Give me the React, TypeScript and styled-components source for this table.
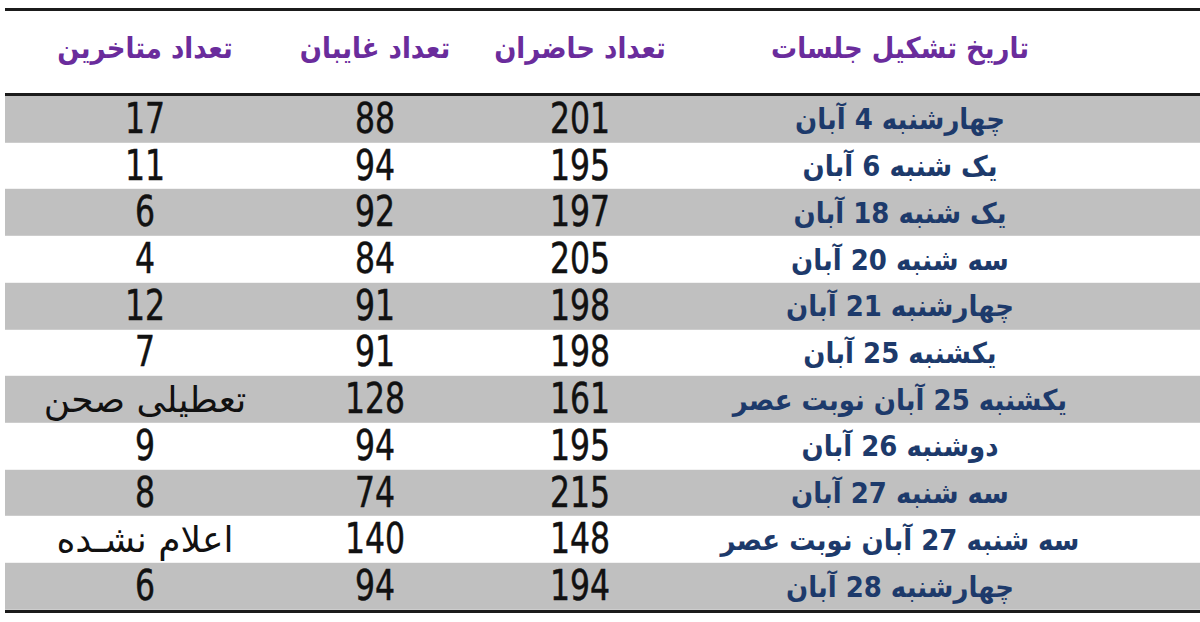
import React from "react";
import styled, { createGlobalStyle } from "styled-components";

const GlobalStyle = createGlobalStyle`
  html, body { margin: 0; padding: 0; background: #ffffff; }
  body { font-family: "DejaVu Sans", sans-serif; }
`;

const Table = styled.div`
  direction: rtl;
  margin-left: 5px;
  padding-top: 8px;
  width: 1195px;
`;

const Rule = styled.div`
  height: 3px;
  background: #1b1b1b;
`;

const Grid = styled.div`
  display: grid;
  grid-template-columns: 410px 230px 180px 280px;
  padding-inline-start: 95px;
  align-items: center;
`;

const HeaderRow = styled(Grid)`
  height: 82px;
  box-sizing: border-box;
  padding-bottom: 8px;
  background: #ffffff;
`;

const BodyRow = styled(Grid)<{ $shaded: boolean }>`
  height: 46.73px;
  background: ${(p) => (p.$shaded ? "#c0c0c0" : "#ffffff")};
  box-shadow: inset 0 -1px 0 ${(p) => (p.$shaded ? "#cdcdcd" : "#f2f2f2")};
`;

const HeadCell = styled.div`
  text-align: center;
  white-space: nowrap;
`;

const HeadText = styled.span`
  display: inline-block;
  font-family: "DejaVu Sans", sans-serif;
  font-weight: bold;
  font-size: 26px;
  color: #6a2c9c;
  transform: scaleY(1.12);
`;

const DateCell = styled.div`
  text-align: center;
  white-space: nowrap;
`;

const DateText = styled.span`
  display: inline-block;
  font-family: "DejaVu Sans", sans-serif;
  font-weight: bold;
  font-size: 26px;
  color: #1d3a6b;
  transform: scaleY(1.1);
`;

const NumCell = styled.div`
  text-align: center;
  white-space: nowrap;
  line-height: 1;
`;

const NumText = styled.span`
  display: inline-block;
  font-family: "DejaVu Sans Condensed", "DejaVu Sans", sans-serif;
  font-stretch: condensed;
  font-size: 35px;
  color: #111111;
  transform: scaleY(1.2);
  -webkit-text-stroke: 0.4px #111111;
`;

const NoteText = styled.span`
  display: inline-block;
  font-family: "DejaVu Sans", sans-serif;
  font-size: 36px;
  color: #111111;
`;

type Row = { date: string; present: string; absent: string; late: string };

const rows: Row[] = [
  { date: "چهارشنبه 4 آبان", present: "201", absent: "88", late: "17" },
  { date: "یک شنبه 6 آبان", present: "195", absent: "94", late: "11" },
  { date: "یک شنبه 18 آبان", present: "197", absent: "92", late: "6" },
  { date: "سه شنبه 20 آبان", present: "205", absent: "84", late: "4" },
  { date: "چهارشنبه 21 آبان", present: "198", absent: "91", late: "12" },
  { date: "یکشنبه 25 آبان", present: "198", absent: "91", late: "7" },
  { date: "یکشنبه 25 آبان نوبت عصر", present: "161", absent: "128", late: "تعطیلی صحن" },
  { date: "دوشنبه 26 آبان", present: "195", absent: "94", late: "9" },
  { date: "سه شنبه 27 آبان", present: "215", absent: "74", late: "8" },
  { date: "سه شنبه 27 آبان نوبت عصر", present: "148", absent: "140", late: "اعلام نشـده" },
  { date: "چهارشنبه 28 آبان", present: "194", absent: "94", late: "6" },
];

const isNumber = (s: string) => /^\d+$/.test(s);

export default function App() {
  return (
    <>
      <GlobalStyle />
      <Table>
        <Rule />
        <HeaderRow>
          <HeadCell><HeadText>تاریخ تشکیل جلسات</HeadText></HeadCell>
          <HeadCell><HeadText>تعداد حاضران</HeadText></HeadCell>
          <HeadCell><HeadText>تعداد غایبان</HeadText></HeadCell>
          <HeadCell><HeadText>تعداد متاخرین</HeadText></HeadCell>
        </HeaderRow>
        <Rule />
        {rows.map((r, i) => (
          <BodyRow key={i} $shaded={i % 2 === 0}>
            <DateCell>
              <DateText>{r.date}</DateText>
            </DateCell>
            <NumCell>
              <NumText>{r.present}</NumText>
            </NumCell>
            <NumCell>
              <NumText>{r.absent}</NumText>
            </NumCell>
            <NumCell>
              {isNumber(r.late) ? <NumText>{r.late}</NumText> : <NoteText>{r.late}</NoteText>}
            </NumCell>
          </BodyRow>
        ))}
        <Rule />
      </Table>
    </>
  );
}
